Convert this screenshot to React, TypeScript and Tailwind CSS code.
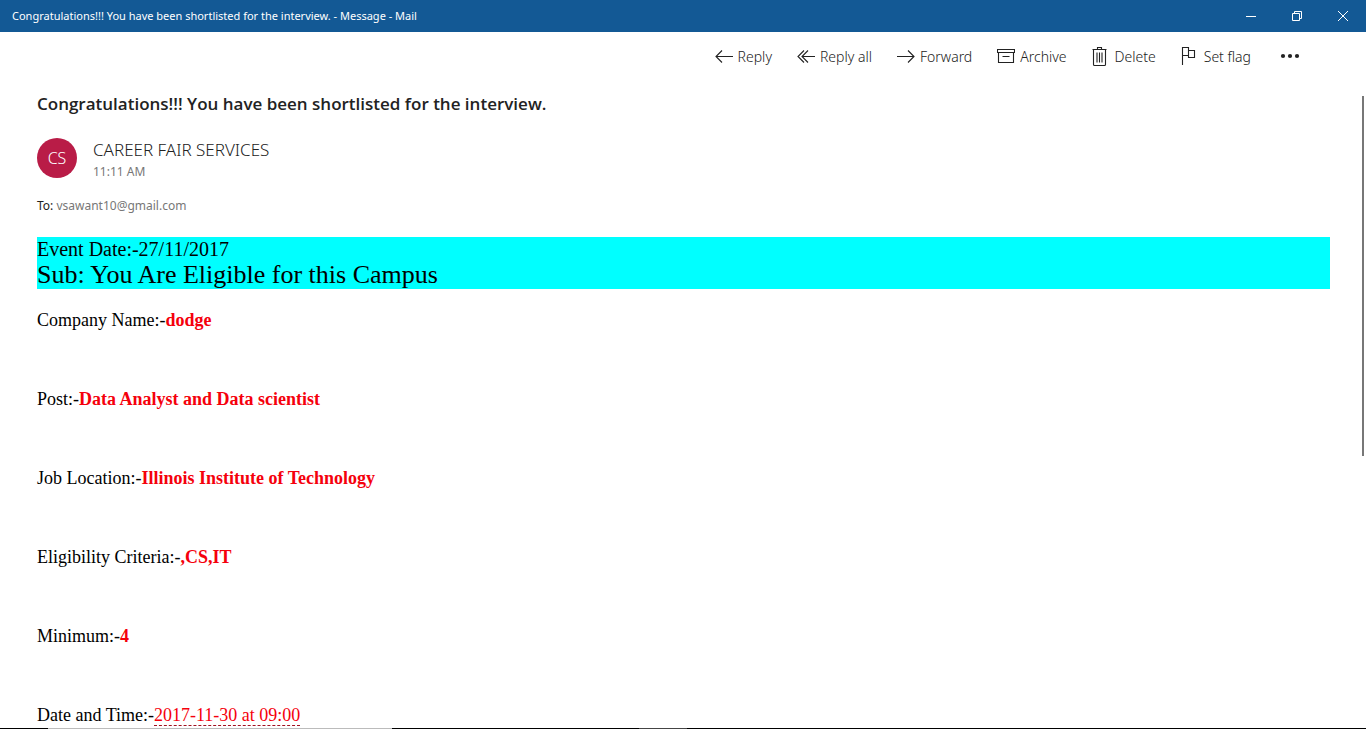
import type { ReactNode } from "react";

function Glyph({ children }: { children: ReactNode }) {
  return (
    <svg
      className="h-5 w-[18px] shrink-0"
      viewBox="0 0 18 20"
      fill="none"
      stroke="currentColor"
      strokeWidth="1.1"
      aria-hidden="true"
    >
      {children}
    </svg>
  );
}

const actions: { label: string; icon: ReactNode }[] = [
  { label: "Reply", icon: <path d="M18 9.500H1M7 3.500l-6 6 6 6" /> },
  { label: "Reply all", icon: <path d="M18 9.500H5M11 3.500l-6 6 6 6M7 3.500l-6 6 6 6" /> },
  { label: "Forward", icon: <path d="M0 9.500h17M11 3.500l6 6-6 6" /> },
  {
    label: "Archive",
    icon: <path d="M.5 2.500h17v3H.5zM1.500 5.500v10h15v-10M5.500 9.500h7" />,
  },
  {
    label: "Delete",
    icon: (
      <path d="M0.500 2.500h14M5.500 2.500v-2h4v2M1.500 2.500v15q0 1 1 1h10q1 0 1-1v-15M5 5.500v10M7.500 5.500v10M10 5.500v10" />
    ),
  },
  {
    label: "Set flag",
    icon: <path d="M1.500 18V.5h6v3h6v7h-6v-2h-6M7.500 3.500v5" />,
  },
];

const details: { label: string; value: string }[] = [
  { label: "Company Name:-", value: "dodge" },
  { label: "Post:-", value: "Data Analyst and Data scientist" },
  { label: "Job Location:-", value: "Illinois Institute of Technology" },
  { label: "Eligibility Criteria:-", value: ",CS,IT" },
  { label: "Minimum:-", value: "4" },
];

function TitleBar() {
  return (
    <header className="flex h-8 shrink-0 items-center justify-between bg-[#135995] pl-3 text-white">
      <h1 className="text-[11px] leading-4">
        Congratulations!!! You have been shortlisted for the interview. - Message - Mail
      </h1>
      <div className="flex h-full">
        <button type="button" aria-label="Minimize" className="flex w-[46px] items-center justify-center">
          <svg className="size-3" viewBox="0 0 12 12" stroke="currentColor" fill="none">
            <path d="M1 6.500h10" />
          </svg>
        </button>
        <button type="button" aria-label="Restore" className="flex w-[46px] items-center justify-center">
          <svg className="size-3" viewBox="0 0 12 12" stroke="currentColor" fill="none">
            <path d="M1.500 3.500h7v7h-7zM3.500 3.500v-2h7v7h-2" />
          </svg>
        </button>
        <button type="button" aria-label="Close" className="flex w-[46px] items-center justify-center">
          <svg className="size-3" viewBox="0 0 12 12" stroke="currentColor" fill="none">
            <path d="M1 1l10 10M11 1L1 11" />
          </svg>
        </button>
      </div>
    </header>
  );
}

function Toolbar() {
  return (
    <nav
      aria-label="Message actions"
      className="flex h-12 shrink-0 items-center justify-end gap-[25px] pt-0.5 pr-[66px] text-[#222]"
    >
      {actions.map((a) => (
        <button key={a.label} type="button" className="flex items-center gap-[5px] text-sm font-light">
          <Glyph>{a.icon}</Glyph>
          {a.label}
        </button>
      ))}
      <button type="button" aria-label="More actions" className="ml-1">
        <svg className="h-5 w-5" viewBox="0 0 20 20" fill="currentColor">
          <circle cx="3" cy="9" r="2.100" />
          <circle cx="10" cy="9" r="2.100" />
          <circle cx="17" cy="9" r="2.100" />
        </svg>
      </button>
    </nav>
  );
}

export default function App() {
  return (
    <div className="flex h-screen flex-col overflow-hidden bg-white font-['Noto_Sans',sans-serif]">
      <TitleBar />
      <Toolbar />
      <main className="relative min-h-0 flex-1 overflow-hidden pt-3 pr-9 pl-[37px]">
        <h2 className="font-['Open_Sans',sans-serif] text-[17px] leading-6 font-semibold text-[#222]">
          Congratulations!!! You have been shortlisted for the interview.
        </h2>
        <section className="mt-[22px] flex gap-4">
          <div className="flex size-10 items-center justify-center rounded-full bg-[#b91c47] text-base font-light text-white">
            CS
          </div>
          <div>
            <p className="text-[17px] leading-6 font-light text-[#222]">CAREER FAIR SERVICES</p>
            <p className="text-xs leading-5 text-[#777]">11:11 AM</p>
          </div>
        </section>
        <p className="mt-[14px] text-xs leading-5 text-[#777]">
          <span className="text-[#222]">To:</span> vsawant10@gmail.com
        </p>
        <article className="mt-[21px] font-['Liberation_Serif',serif] text-lg leading-5 text-black">
          <div className="bg-[#00ffff]">
            <p className="text-xl leading-6">Event Date:-27/11/2017</p>
            <p className="text-[26px] leading-7">Sub: You Are Eligible for this Campus</p>
          </div>
          <div className="mt-[21px] flex flex-col gap-[59px]">
            {details.map((d) => (
              <p key={d.label}>
                {d.label}
                <strong className="text-[#f5000c]">{d.value}</strong>
              </p>
            ))}
            <p>
              Date and Time:-
              <a
                href="#event"
                className="border-b border-dashed border-[#a01020] text-[#f5000c]"
              >
                2017-11-30 at 09:00
              </a>
            </p>
          </div>
        </article>
        <div className="absolute top-4 right-[2px] h-[360px] w-[2px] bg-[#777]" />
      </main>
      <footer className="flex h-px shrink-0 bg-black">
        <div className="ml-12 h-px w-[344px] bg-[#bbb]" />
        <div className="ml-[247px] h-px w-12 bg-[#444]" />
      </footer>
    </div>
  );
}
